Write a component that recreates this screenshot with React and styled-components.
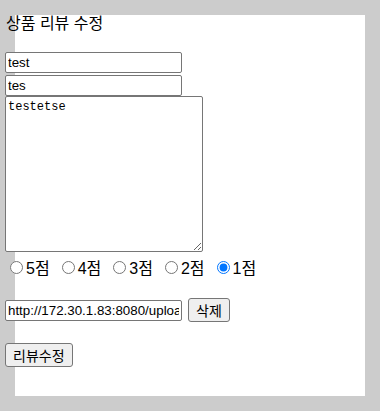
import React from "react";
import styled, {createGlobalStyle} from "styled-components";

const GlobalStyle = createGlobalStyle`
  html, body {
    margin: 0;
    padding: 0;
    background: #cccccc;
  }
  body {
    font-family: "Liberation Sans", "Noto Sans CJK KR", sans-serif;
    color: #000;
  }
`

const scores = [5, 4, 3, 2, 1];

const App = () => {

    const submitHandler = e => {
        e.preventDefault();
    }

    return (
        <Page>
            <GlobalStyle/>
            <Panel>
                <Form onSubmit={submitHandler}>
                    <Title>상품 리뷰 수정</Title>
                    <Input type="text" defaultValue="test"/>
                    <Input type="text" defaultValue="tes" $gap/>
                    <Textarea rows="10" defaultValue="testetse"/>
                    <RadioRow>
                        {scores.map(s => (
                            <Option key={s}>
                                <Radio type="radio" name="score" value={s} defaultChecked={s === 1}/>
                                {s}점
                            </Option>
                        ))}
                    </RadioRow>
                    <FileRow>
                        <Input type="text" defaultValue="http://172.30.1.83:8080/upload/review/test.png"/>
                        <Button type="button">삭제</Button>
                    </FileRow>
                    <Button type="submit">리뷰수정</Button>
                </Form>
            </Panel>
        </Page>
    )
}

const Page = styled('div')`
  padding: 15px;
  min-height: 411px;
  box-sizing: border-box;
`

const Panel = styled('div')`
  background: #ffffff;
  width: 350px;
  height: 381px;
`

const Form = styled('form')`
  margin-left: -10px;
  display: flex;
  flex-direction: column;
  align-items: flex-start;
`

const Title = styled('div')`
  font-size: 16px;
  line-height: 20px;
  margin-top: -1px;
  margin-bottom: 18px;
  margin-left: 1px;
`

const Input = styled('input')`
  box-sizing: border-box;
  width: 177px;
  height: 21px;
  margin: 0 0 ${p => p.$gap ? '0' : '2px'} 0;
  padding: 1px 2px;
  border: 1px solid #767676;
  border-radius: 2px;
  font-family: "Liberation Sans", "Noto Sans CJK KR", sans-serif;
  font-size: 13.33px;
  color: #000;
  background: #fff;
  outline: none;
`

const Textarea = styled('textarea')`
  box-sizing: border-box;
  width: 198px;
  height: 156px;
  margin: 0;
  padding: 3px 2px 2px;
  border: 1px solid #767676;
  border-radius: 2px;
  font-family: "Liberation Mono", monospace;
  font-size: 12px;
  line-height: 15px;
  color: #000;
  outline: none;
`

const RadioRow = styled('div')`
  display: flex;
  align-items: center;
  height: 22px;
  margin-top: 4px;
  font-size: 16px;
`

const Option = styled('label')`
  display: inline-flex;
  align-items: center;
  margin-right: 7px;
`

const Radio = styled('input')`
  width: 13px;
  height: 13px;
  margin: 0 3px 0 5px;
  accent-color: #0075ff;
`

const FileRow = styled('div')`
  display: flex;
  align-items: center;
  gap: 6px;
  margin-top: 20px;
  margin-bottom: 21px;

  & > input {
    margin: 0;
  }
`

const Button = styled('button')`
  box-sizing: border-box;
  height: 24px;
  padding: 0 7px;
  border: 1px solid #767676;
  border-radius: 3px;
  background: #efefef;
  font-family: "Liberation Sans", "Noto Sans CJK KR", sans-serif;
  font-size: 14px;
  color: #000;
  cursor: pointer;
`

export default App;
